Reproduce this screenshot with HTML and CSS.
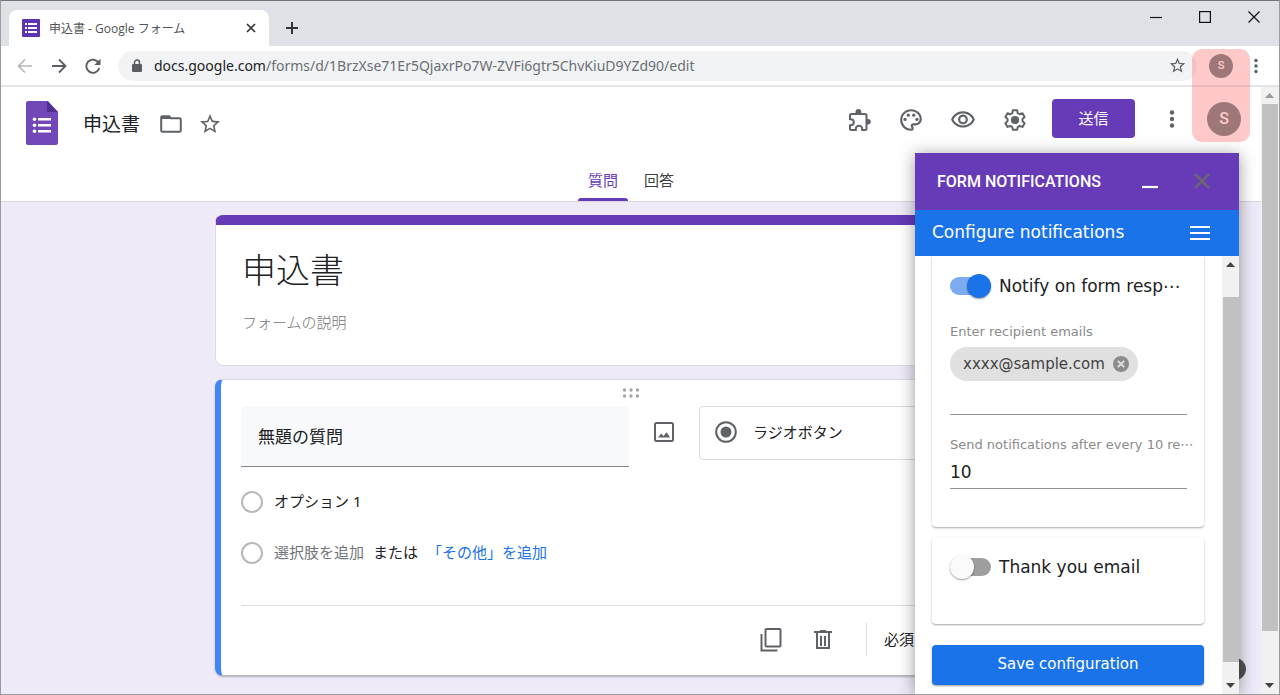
FILE: index.html
```html
<!DOCTYPE html>
<html lang="ja">
<head>
<meta charset="utf-8">
<title>申込書 - Google フォーム</title>
<link rel="stylesheet" href="styles.css">
</head>
<body>
<div class="window">
  <header class="tabstrip">
    <div class="tab">
      <svg class="favicon" viewBox="0 0 18 18"><rect width="18" height="18" rx="1" fill="#5e35b1"/><path fill="#fff" d="M3 4h2v2H3zM3 8h2v2H3zM3 12h2v2H3zM6 4h9v2H6zM6 8h9v2H6zM6 12h9v2H6z"/></svg>
      <span class="tab-title">申込書 - Google フォーム</span>
      <button class="icon-btn" aria-label="タブを閉じる"><svg width="10" height="10" viewBox="0 0 10 10"><path d="M1 1l8 8M9 1l-8 8" stroke="#333" stroke-width="1.7"/></svg></button>
    </div>
    <button class="icon-btn new-tab" aria-label="新しいタブ"><svg width="14" height="14" viewBox="0 0 14 14"><path d="M7 1v12M1 7h12" stroke="#333" stroke-width="2"/></svg></button>
    <div class="window-controls">
      <button class="icon-btn" aria-label="最小化"><svg width="12" height="12" viewBox="0 0 12 12"><path d="M0 6.5h12" stroke="#111" stroke-width="1.2"/></svg></button>
      <button class="icon-btn" aria-label="最大化"><svg width="12" height="12" viewBox="0 0 12 12"><rect x=".6" y=".6" width="10.8" height="10.8" fill="none" stroke="#111" stroke-width="1.2"/></svg></button>
      <button class="icon-btn" aria-label="閉じる"><svg width="12" height="12" viewBox="0 0 12 12"><path d="M.5.5l11 11M11.5.5l-11 11" stroke="#111" stroke-width="1.2"/></svg></button>
    </div>
  </header>

  <div class="toolbar">
    <nav class="history">
      <button class="icon-btn" aria-label="戻る"><svg width="16" height="16" viewBox="0 0 16 16"><path d="M15 8H2M8 1.500L1.500 8 8 14.500" fill="none" stroke="#b5b7ba" stroke-width="1.700"/></svg></button>
      <button class="icon-btn" aria-label="進む"><svg width="16" height="16" viewBox="0 0 16 16"><path d="M1 8h13M8 1.500L14.500 8 8 14.500" fill="none" stroke="#5a5d61" stroke-width="1.800"/></svg></button>
      <button class="icon-btn" aria-label="再読み込み"><svg width="16" height="16" viewBox="0 0 16 16"><path d="M13.700 5A6.600 6.600 0 1 0 14.300 10" fill="none" stroke="#5a5d61" stroke-width="1.900"/><path d="M15.500.8V7H9.300z" fill="#5a5d61"/></svg></button>
    </nav>
    <div class="omnibox">
      <svg width="10" height="14" viewBox="0 0 10 14"><rect y="5" width="10" height="8" rx="1" fill="#5a5d61"/><path d="M2.500 6V3.500a2.500 2.500 0 0 1 5 0V6" fill="none" stroke="#5a5d61" stroke-width="1.500"/></svg>
      <div class="url" role="textbox" contenteditable="true" spellcheck="false" aria-label="アドレス"><span class="url-host">docs.google.com</span>/forms/d/1BrzXse71Er5QjaxrPo7W-ZVFi6gtr5ChvKiuD9YZd90/edit</div>
      <button class="icon-btn" aria-label="ブックマーク"><svg width="17" height="17" viewBox="1 1 22 22"><path fill="#5a5d61" d="M22 9.240l-7.190-.62L12 2 9.190 8.630 2 9.240l5.460 4.730L5.820 21 12 17.270 18.180 21l-1.630-7.030L22 9.240zM12 15.400l-3.760 2.270 1-4.280-3.320-2.880 4.380-.38L12 6.100l1.710 4.040 4.380.38-3.320 2.880 1 4.280L12 15.400z"/></svg></button>
    </div>
    <button class="avatar avatar-small" aria-label="プロファイル">S</button>
    <button class="icon-btn" aria-label="Chrome メニュー"><svg width="4" height="16" viewBox="0 0 4 16"><g fill="#5a5d61"><circle cx="2" cy="2.500" r="1.700"/><circle cx="2" cy="8" r="1.700"/><circle cx="2" cy="13.500" r="1.700"/></g></svg></button>
  </div>

  <div class="viewport">
    <div class="page">
      <header class="app-header">
        <div class="app-bar">
          <svg width="32" height="44" viewBox="0 0 32 44"><path d="M2 0h20l10 11v31a2 2 0 0 1-2 2H2a2 2 0 0 1-2-2V2a2 2 0 0 1 2-2z" fill="#7248b9"/><path d="M21 0l11 11H21z" fill="#52308f"/><path fill="#fff" d="M12 17h13v2.500H12zM12 23h13v2.500H12zM12 29h13v2.500H12z"/><g fill="#fff"><circle cx="8.500" cy="18.200" r="1.800"/><circle cx="8.500" cy="24.200" r="1.800"/><circle cx="8.500" cy="30.200" r="1.800"/></g></svg>
          <h1 class="doc-title">申込書</h1>
          <button class="icon-btn" aria-label="フォルダに移動"><svg width="22" height="18" viewBox="0 0 22 18"><path d="M1.200 3V15.500a1.300 1.300 0 0 0 1.300 1.300h17a1.300 1.300 0 0 0 1.300-1.300V4.500a1.300 1.300 0 0 0-1.300-1.300H10.800L9 1.200H2.500A1.300 1.300 0 0 0 1.200 2.500z" fill="none" stroke="#5f6368" stroke-width="2"/><path d="M1.500 1h7.800l2 3H1.500z" fill="#5f6368"/></svg></button>
          <button class="icon-btn" aria-label="スターを付ける"><svg width="22" height="22" viewBox="1 1 22 22"><path fill="#5f6368" d="M22 9.240l-7.190-.62L12 2 9.190 8.630 2 9.240l5.460 4.730L5.820 21 12 17.270 18.180 21l-1.630-7.030L22 9.240zM12 15.400l-3.760 2.270 1-4.280-3.320-2.880 4.380-.38L12 6.100l1.710 4.040 4.380.38-3.320 2.880 1 4.280L12 15.400z"/></svg></button>
          <div class="app-actions">
            <button class="icon-btn" aria-label="アドオン"><svg width="26" height="26" viewBox="0 0 26 26"><path d="M4 8.500a1.500 1.500 0 0 1 1.500-1.500H19a1.500 1.500 0 0 1 1.500 1.500V21.500a1.500 1.500 0 0 1-1.500 1.500h-2.800v-1a3.200 3.200 0 0 0-6.400 0v1H5.500a1.500 1.500 0 0 1-1.500-1.500v-3.300h.8a3 3 0 0 0 0-6H4z" fill="none" stroke="#5f6368" stroke-width="2"/><path d="M9.500 6V4.800a2.900 2.900 0 0 1 5.800 0V6zM21 12h1a2.500 2.500 0 0 1 0 5.500h-1z" fill="#5f6368"/></svg></button>
            <button class="icon-btn" aria-label="テーマをカスタマイズ"><svg width="26" height="26" viewBox="0 0 24 24"><path fill="#5f6368" d="M12 22C6.490 22 2 17.510 2 12S6.490 2 12 2s10 4.040 10 9c0 3.310-2.690 6-6 6h-1.770c-.28 0-.5.22-.5.5 0 .12.050.23.130.33.410.47.640 1.060.640 1.670A2.500 2.500 0 0 1 12 22zm0-18c-4.410 0-8 3.590-8 8s3.590 8 8 8c.28 0 .5-.22.5-.5a.54.540 0 0 0-.14-.35c-.41-.46-.63-1.050-.63-1.650a2.500 2.500 0 0 1 2.500-2.500H16c2.210 0 4-1.790 4-4 0-3.860-3.590-7-8-7z"/><g fill="#5f6368"><circle cx="6.500" cy="11.500" r="1.500"/><circle cx="9.500" cy="7.500" r="1.500"/><circle cx="14.500" cy="7.500" r="1.500"/><circle cx="17.500" cy="11.500" r="1.500"/></g></svg></button>
            <button class="icon-btn" aria-label="プレビュー"><svg width="26" height="26" viewBox="0 0 24 24"><path fill="#5f6368" d="M12 6c3.790 0 7.170 2.130 8.820 5.500C19.170 14.870 15.790 17 12 17s-7.170-2.130-8.820-5.500C4.830 8.130 8.210 6 12 6m0-2C7 4 2.730 7.110 1 11.500 2.730 15.890 7 19 12 19s9.270-3.110 11-7.500C21.270 7.110 17 4 12 4zm0 5a2.500 2.500 0 0 1 0 5 2.500 2.500 0 0 1 0-5m0-2c-2.480 0-4.500 2.020-4.500 4.500S9.520 16 12 16s4.500-2.020 4.500-4.500S14.480 7 12 7z"/></svg></button>
            <button class="icon-btn" aria-label="設定"><svg width="26" height="26" viewBox="0 0 24 24"><path fill="none" stroke="#5f6368" stroke-width="1.800" stroke-linejoin="round" d="M10 3h4l.5 2.600 1.900 1.100 2.500-.9 2 3.500-2 1.700v2.200l2 1.700-2 3.500-2.500-.9-1.900 1.100L14 21h-4l-.5-2.400-1.900-1.100-2.500.9-2-3.500 2-1.700V11l-2-1.700 2-3.500 2.500.9 1.900-1.100z"/><circle cx="12" cy="12" r="3.800" fill="#5f6368"/></svg></button>
          </div>
          <button class="send">送信</button>
          <button class="icon-btn more" aria-label="その他"><svg width="6" height="20" viewBox="0 0 6 20"><g fill="#5f6368"><circle cx="3" cy="3.500" r="2.200"/><circle cx="3" cy="10" r="2.200"/><circle cx="3" cy="16.500" r="2.200"/></g></svg></button>
          <button class="avatar" aria-label="Google アカウント">S</button>
        </div>
        <nav class="form-tabs">
          <a class="form-tab form-tab-active" href="#questions">質問</a>
          <a class="form-tab" href="#responses">回答</a>
        </nav>
      </header>

      <main class="form" id="questions">
        <section class="card card-title">
          <input class="form-name" value="申込書" aria-label="フォームのタイトル">
          <input class="form-desc" placeholder="フォームの説明" aria-label="説明">
        </section>

        <section class="card card-question">
          <svg class="grip" width="18" height="10" viewBox="0 0 18 10"><g fill="#a5a5a5"><circle cx="2.500" cy="2" r="1.700"/><circle cx="9" cy="2" r="1.700"/><circle cx="15.500" cy="2" r="1.700"/><circle cx="2.500" cy="8" r="1.700"/><circle cx="9" cy="8" r="1.700"/><circle cx="15.500" cy="8" r="1.700"/></g></svg>
          <div class="question-row">
            <input class="question-name" value="無題の質問" aria-label="質問">
            <button class="icon-btn image-btn" aria-label="画像を追加"><svg width="20" height="20" viewBox="0 0 20 20"><rect x="1" y="1" width="18" height="18" rx="1.500" fill="none" stroke="#5f6368" stroke-width="2"/><path fill="#5f6368" d="M4 15.500l3.200-4 2.300 2.500 3-3.800 3.700 5.300z"/></svg></button>
            <div class="type-field">
              <svg width="22" height="22" viewBox="0 0 22 22"><circle cx="11" cy="11" r="9.800" fill="none" stroke="#5f6368" stroke-width="2"/><circle cx="11" cy="11" r="5.500" fill="#5f6368"/></svg>
              <select class="type-select" aria-label="質問の種類"><option>ラジオボタン</option></select>
            </div>
          </div>
          <div class="option-row">
            <input class="radio" type="radio" name="opt" aria-label="オプション 1">
            <input class="option-name" value="オプション 1" aria-label="オプション名">
          </div>
          <div class="option-row">
            <input class="radio" type="radio" name="opt" aria-label="新しい選択肢">
            <div class="add-option">
              <button class="text-btn text-muted">選択肢を追加</button>
              <span>または</span>
              <button class="text-btn text-link">「その他」を追加</button>
            </div>
          </div>
          <footer class="question-footer">
            <button class="icon-btn" aria-label="コピーを作成"><svg width="22" height="24" viewBox="0 0 22 24"><rect x="5.500" y="1" width="15" height="17.500" rx="1" fill="none" stroke="#5f6368" stroke-width="2"/><path d="M1.500 6v16.500H17.500" fill="none" stroke="#5f6368" stroke-width="2"/></svg></button>
            <button class="icon-btn" aria-label="削除"><svg width="18" height="20" viewBox="0 0 18 20"><path d="M0 2h18M6 1h6M3 2.500v15.500h12V2.500M7 6v10M11 6v10" fill="none" stroke="#5f6368" stroke-width="2"/></svg></button>
            <span class="required">必須</span>
          </footer>
        </section>
      </main>

      <button class="help" aria-label="ヘルプ"></button>

      <aside class="addon">
        <header class="addon-head">
          <h2 class="addon-name">FORM NOTIFICATIONS</h2>
          <button class="icon-btn" aria-label="最小化"><svg width="16" height="16" viewBox="0 0 16 16"><path d="M0 13h16" stroke="#fff" stroke-width="2.200"/></svg></button>
          <button class="icon-btn" aria-label="閉じる"><svg width="16" height="18" viewBox="0 0 16 18"><path d="M1 1l14 14M15 1L1 15" stroke="#6b6770" stroke-width="2.500"/></svg></button>
        </header>
        <div class="addon-bar">
          <h3 class="addon-title">Configure notifications</h3>
          <button class="icon-btn" aria-label="メニュー"><svg width="20" height="14" viewBox="0 0 20 14"><path d="M0 1h20M0 7h20M0 13h20" stroke="#fff" stroke-width="2"/></svg></button>
        </div>
        <div class="addon-body">
          <div class="addon-content">
            <section class="panel-card panel-card-first">
              <label class="switch-row"><input class="switch" type="checkbox" checked>Notify on form resp⋯</label>
              <div class="field">
                <label class="field-label" for="emails">Enter recipient emails</label>
                <div class="chips">
                  <span class="chip">xxxx@sample.com<button class="icon-btn" aria-label="削除"><svg width="16" height="16" viewBox="0 0 16 16"><circle cx="8" cy="8" r="8" fill="#8c8c8c"/><path d="M4.800 4.800l6.400 6.400M11.200 4.800l-6.400 6.400" stroke="#e0e0e0" stroke-width="1.900"/></svg></button></span>
                  <input class="field-input" id="emails" type="email">
                </div>
              </div>
              <div class="field">
                <label class="field-label" for="every">Send notifications after every 10 re⋯</label>
                <input class="field-input" id="every" value="10">
              </div>
            </section>
            <section class="panel-card">
              <label class="switch-row"><input class="switch" type="checkbox">Thank you email</label>
            </section>
            <button class="save">Save configuration</button>
          </div>
          <div class="scrollbar scrollbar-panel">
            <svg class="arrow" viewBox="0 0 17 17"><path fill="#444" d="M4 11h9L8.500 6z"/></svg>
            <div class="track"><div class="thumb"></div></div>
            <svg class="arrow" viewBox="0 0 17 17"><path fill="#444" d="M4 6h9l-4.500 5z"/></svg>
          </div>
        </div>
      </aside>
    </div>
    <div class="scrollbar">
      <svg class="arrow" viewBox="0 0 17 17"><path fill="#999" d="M4 11h9L8.500 6z"/></svg>
      <div class="track"><div class="thumb"></div></div>
      <svg class="arrow" viewBox="0 0 17 17"><path fill="#444" d="M4 6h9l-4.500 5z"/></svg>
    </div>
  </div>
  <div class="highlight"></div>
</div>
</body>
</html>
```
FILE: styles.css
```css
* { box-sizing: border-box; }

body {
  margin: 0;
  font-family: "Noto Sans", "Noto Sans CJK JP", sans-serif;
  font-size: 15px;
  color: #202124;
}

h1, h2, h3 { margin: 0; font-weight: 400; }
button, input, select { font: inherit; color: inherit; padding: 0; border: 0; background: none; border-radius: 0; outline: 0; }
svg { display: block; flex: none; }

.icon-btn { display: flex; align-items: center; justify-content: center; flex: none; }

.window {
  position: relative;
  display: flex;
  flex-direction: column;
  height: 100vh;
  overflow: hidden;
  border: 1px solid #9b9b9b;
  border-top-color: #757575;
  background: #fff;
}

/* Tab strip */
.tabstrip { display: flex; height: 45px; background: #dee1e6; padding-left: 8px; flex: none; }
.tab {
  display: flex;
  align-items: center;
  width: 260px;
  margin-top: 9px;
  padding: 0 13px 0 13px;
  border-radius: 8px 8px 0 0;
  background: #fff;
}
.favicon { width: 18px; height: 18px; }
.tab-title { flex: 1; margin-left: 9px; font-family: "Open Sans", "Noto Sans CJK JP", sans-serif; font-size: 12px; color: #505357; }
.new-tab { margin: 9px 0 0 16px; }
.window-controls { display: flex; gap: 37px; height: 32px; margin-left: auto; padding-right: 19px; }

/* Toolbar */
.toolbar {
  display: flex;
  align-items: center;
  height: 41px;
  padding: 0 21px 0 16px;
  border-bottom: 2px solid #e4e5e9;
  flex: none;
}
.history { display: flex; gap: 18px; }
.omnibox {
  display: flex;
  align-items: center;
  flex: 1;
  height: 30px;
  margin: 0 12px 0 17px;
  padding: 0 11px 0 14px;
  border-radius: 15px;
  background: #f1f3f4;
}
.url { flex: 1; margin-left: 12px; font-family: "Noto Sans", sans-serif; font-size: 14px; color: #6b6f74; outline: 0; white-space: nowrap; }
.url-host { color: #202124; }
.toolbar .avatar-small { margin-right: 21px; }

.avatar {
  width: 34px;
  height: 34px;
  border-radius: 50%;
  background: #6b8383;
  color: #fff;
  font-family: Roboto, sans-serif;
  font-size: 16px;
  font-weight: 500;
  flex: none;
}
.avatar-small { width: 24px; height: 24px; font-size: 11px; }

.highlight {
  position: absolute;
  top: 48px;
  right: 29px;
  width: 58px;
  height: 93px;
  border-radius: 10px;
  background: rgba(255, 100, 100, .35);
  pointer-events: none;
}

/* Page */
.viewport { display: flex; flex: 1; min-height: 0; }
.page { position: relative; flex: 1; min-width: 0; overflow: hidden; background: #eeeaf8; }

.app-header { background: #fff; border-bottom: 1px solid #d9d6e2; }
.app-bar { display: flex; align-items: center; height: 63px; padding: 0 20px 0 25px; }
.app-bar > svg { margin-top: 9px; }
.doc-title { margin: 8px 20px 0 25px; font-size: 19px; }
.app-bar > .doc-title + .icon-btn { margin: 11px 17px 0 0; }
.app-bar > .icon-btn + .icon-btn { margin-top: 11px; }
.app-actions { display: flex; gap: 26px; margin: 2px 24px 0 auto; }
.send { width: 83px; height: 39px; padding-bottom: 3px; border-radius: 4px; background: #673ab7; color: #fff; }
.more { margin: 0 32px 0 34px; }

.form-tabs { display: flex; justify-content: center; height: 51px; gap: 6px; padding-top: 10px; }
.form-tab {
  position: relative;
  display: flex;
  align-items: center;
  padding: 0 10px 2px;
  color: #3c4043;
  text-decoration: none;
}
.form-tab-active { color: #673ab7; }
.form-tab-active::after {
  content: "";
  position: absolute;
  left: 0;
  right: 0;
  bottom: 0;
  height: 3px;
  border-radius: 3px 3px 0 0;
  background: #673ab7;
}

/* Form cards */
.form { display: flex; flex-direction: column; gap: 13px; width: 832px; max-width: 100%; margin: 13px auto 0; }
.card { display: flex; flex-direction: column; border-radius: 8px; background: #fff; border: 1px solid #dadce0; }
.card-title { padding: 21px 26px 31px; border-top: 10px solid #673ab7; }
.form-name { height: 44px; font-size: 34px; font-weight: 300; }
.form-desc { height: 24px; margin-top: 20px; font-weight: 300; }
.form-desc::placeholder { color: #757575; opacity: 1; }

.card-question {
  padding: 8px 25px 19px 20px;
  border-left: 6px solid #4285f4;
  border-bottom-color: #b9b8c2;
  box-shadow: 0 1px 2px rgba(0, 0, 0, .25);
}
.grip { align-self: center; margin-bottom: 8px; }
.question-row { display: grid; grid-template-columns: 388px 22px 1fr; gap: 24px; align-items: start; }
.question-name {
  height: 61px;
  padding: 0 17px 2px;
  border-bottom: 1px solid #80868b;
  border-radius: 4px 4px 0 0;
  background: #f8f9fa;
  font-size: 17px;
}
.image-btn { height: 52px; }
.type-field {
  display: flex;
  align-items: center;
  gap: 16px;
  height: 54px;
  padding: 0 15px 2px;
  border: 1px solid #dadce0;
  border-radius: 4px;
}
.type-select { flex: 1; appearance: none; }

.option-row { display: flex; align-items: center; gap: 11px; height: 51px; }
.question-row + .option-row { margin-top: 9px; }
.radio {
  appearance: none;
  width: 22px;
  height: 22px;
  margin: 0;
  border: 2px solid #b8b8b8;
  border-radius: 50%;
}
.option-name { flex: 1; height: 26px; padding-bottom: 2px; }
.add-option { display: flex; gap: 9px; padding-bottom: 2px; }
.text-muted { color: #70757a; }
.text-link { color: #1a73e8; }

.question-footer {
  display: flex;
  align-items: center;
  justify-content: flex-end;
  gap: 32px;
  margin-top: 27px;
  padding: 17px 107px 0 0;
  border-top: 1px solid #dadce0;
}
.required { margin-left: 2px; padding: 5px 0 7px 17px; border-left: 1px solid #dadce0; }

.help { position: absolute; right: 15px; bottom: 14px; width: 22px; height: 22px; border-radius: 50%; background: #555; }

/* Add-on panel */
.addon {
  position: absolute;
  top: 66px;
  right: 22px;
  bottom: 0;
  display: flex;
  flex-direction: column;
  width: 324px;
  background: #fff;
  box-shadow: 0 2px 16px rgba(0, 0, 0, .4);
  font-family: "DejaVu Sans", "Noto Sans CJK JP", sans-serif;
}
.addon-head { display: flex; align-items: center; height: 57px; padding: 0 29px 0 22px; gap: 36px; background: #673ab7; color: #fff; flex: none; }
.addon-name { flex: 1; font-family: Roboto, sans-serif; font-size: 16px; font-weight: 500; white-space: nowrap; }
.addon-bar { display: flex; align-items: center; height: 46px; padding: 0 29px 0 17px; background: #1a73e8; color: #fff; flex: none; }
.addon-title { flex: 1; padding-bottom: 2px; font-size: 17px; }
.addon-body { display: flex; flex: 1; min-height: 0; }
.addon-content { display: flex; flex-direction: column; flex: 1; min-width: 0; padding: 0 18px 0 17px; }

.panel-card { height: 87px; padding: 18px 17px 0 18px; border-radius: 4px; box-shadow: 0 1px 2px rgba(0, 0, 0, .35); }
.panel-card-first { height: auto; margin-bottom: 10px; padding-bottom: 38px; border-radius: 0 0 4px 4px; }

.switch-row { display: flex; align-items: center; gap: 8px; height: 24px; font-size: 17px; white-space: nowrap; }
.switch {
  position: relative;
  appearance: none;
  width: 41px;
  height: 18px;
  margin: 0;
  border-radius: 9px;
  background: #9e9e9e;
  flex: none;
}
.switch::before {
  content: "";
  position: absolute;
  top: -3px;
  left: 0;
  width: 24px;
  height: 24px;
  border-radius: 50%;
  background: #fafafa;
  box-shadow: 0 1px 2px rgba(0, 0, 0, .4);
}
.switch:checked { background: #7cabf2; }
.switch:checked::before { left: auto; right: 0; background: #1a73e8; }

.field { display: flex; flex-direction: column; margin-top: 20px; }
.switch-row + .field { margin-top: 24px; }
.field-label { height: 20px; font-size: 13px; line-height: 20px; color: #8a8a8a; white-space: nowrap; }
.chips { display: flex; flex-direction: column; align-items: stretch; margin-top: 5px; }
.chip {
  display: flex;
  align-items: center;
  align-self: flex-start;
  gap: 8px;
  height: 34px;
  padding: 0 9px 0 13px;
  border-radius: 17px;
  background: #e0e0e0;
  color: #424242;
}
.field-input { width: 100%; height: 34px; border-bottom: 1px solid #949494; font-size: 17px; }

.save {
  height: 40px;
  margin-top: 21px;
  padding-bottom: 2px;
  border-radius: 4px;
  background: #1a73e8;
  color: #fff;
  box-shadow: 0 1px 2px rgba(0, 0, 0, .4);
}

/* Scrollbars */
.scrollbar { display: flex; flex-direction: column; width: 18px; background: #f1f1f1; flex: none; }
.arrow { width: 17px; height: 17px; }
.track { flex: 1; }
.thumb { width: 16px; height: 92%; margin-left: 1px; background: #c1c1c1; }
.scrollbar-panel { width: 17px; }
.scrollbar-panel .track { padding-top: 24px; }
.scrollbar-panel .thumb { height: 96%; }
```
